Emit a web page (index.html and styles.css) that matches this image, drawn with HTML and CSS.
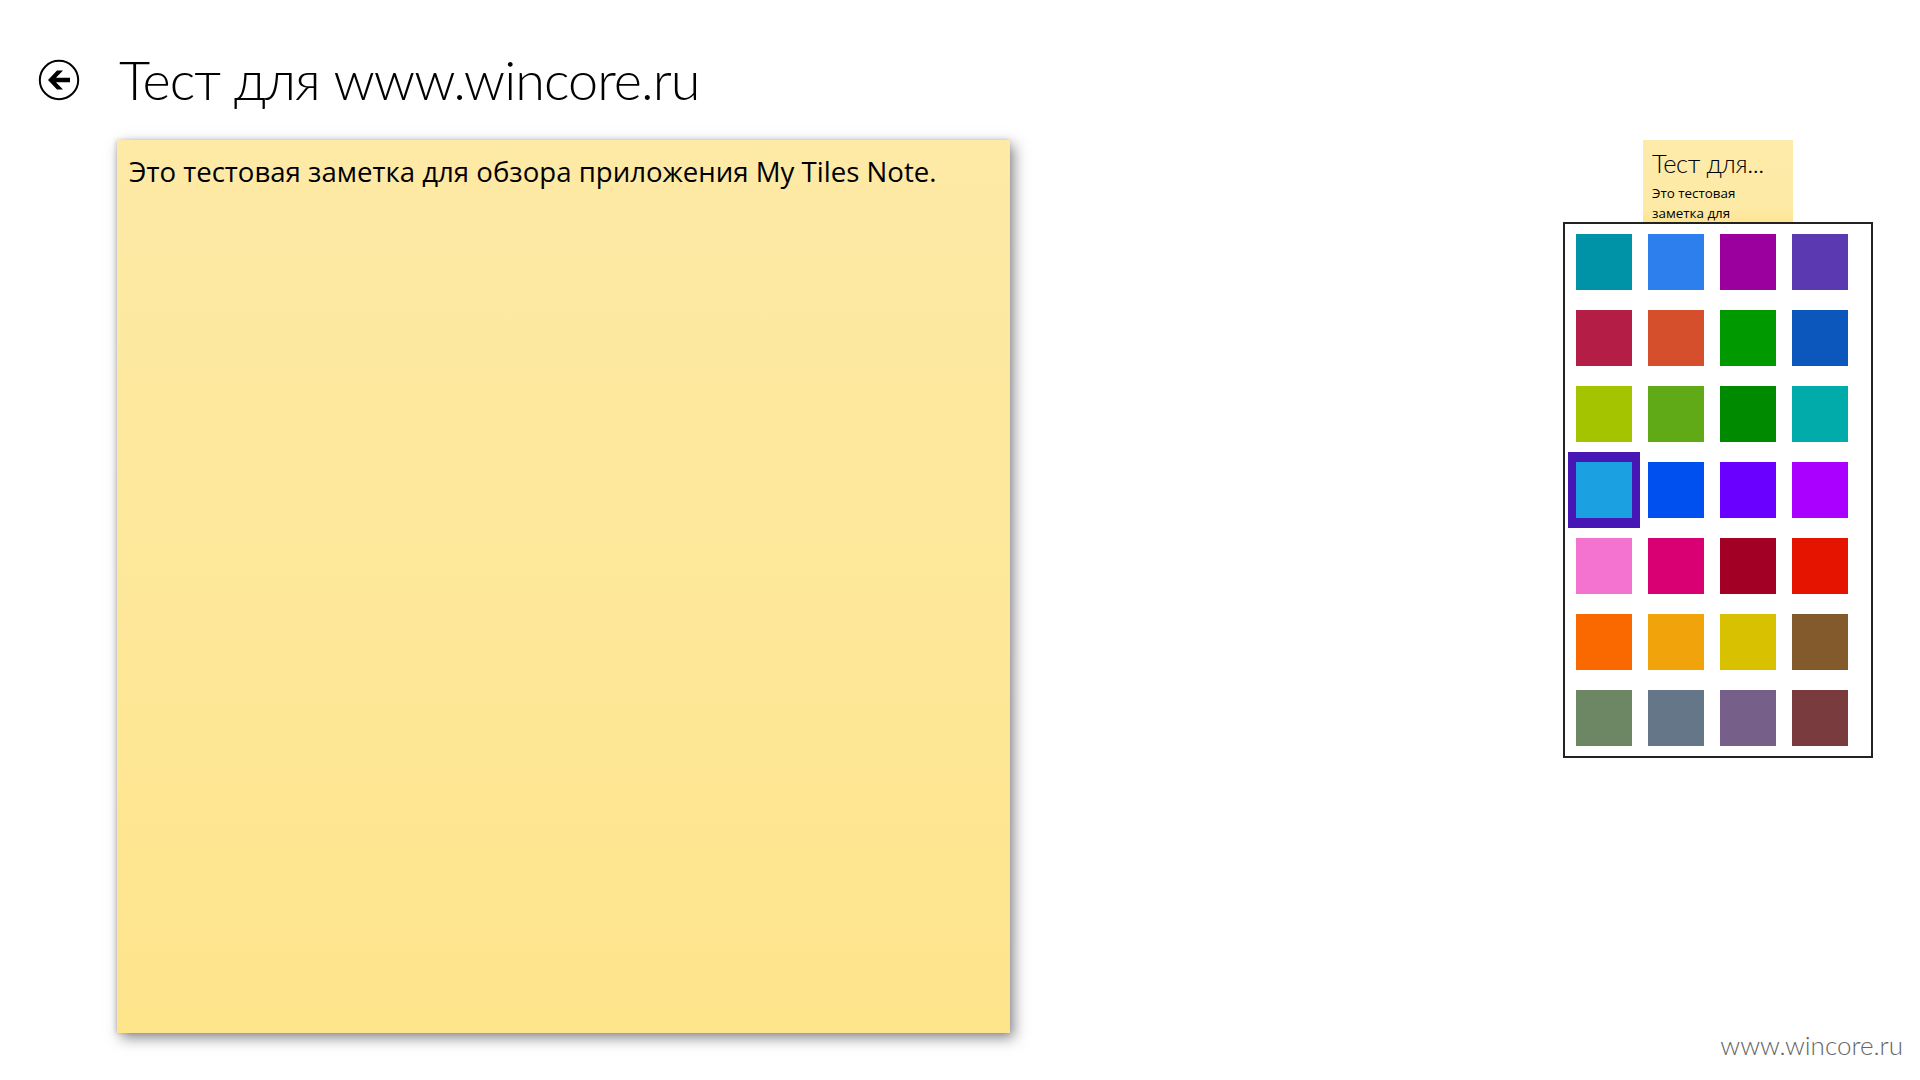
FILE: index.html
```html
<!DOCTYPE html>
<html lang="ru">
<head>
<meta charset="utf-8">
<title>Тест для www.wincore.ru</title>
<link rel="stylesheet" href="styles.css">
</head>
<body>
<div class="page">
  <header class="header">
    <svg class="back" width="42" height="42" viewBox="0 0 42 42" aria-hidden="true">
      <circle cx="21" cy="21" r="19.2" fill="none" stroke="#000" stroke-width="2"/>
      <path d="M10 21 L19 11.5 L25 11.5 L18 18.7 L32 18.7 L32 23.3 L18 23.3 L25 30.5 L19 30.5 Z" fill="#000"/>
    </svg>
    <h1 class="title">Тест для www.wincore.ru</h1>
  </header>
  <main class="main">
    <article class="note">
      <p class="note-text">Это тестовая заметка для обзора приложения My Tiles Note.</p>
    </article>
    <aside class="side">
      <div class="tile">
        <div class="tile-title">Тест для...</div>
        <div class="tile-text">Это тестовая заметка для обзора приложения</div>
      </div>
      <div class="palette">
        <div class="cell"><span class="swatch c1"></span></div>
        <div class="cell"><span class="swatch c2"></span></div>
        <div class="cell"><span class="swatch c3"></span></div>
        <div class="cell"><span class="swatch c4"></span></div>
        <div class="cell"><span class="swatch c5"></span></div>
        <div class="cell"><span class="swatch c6"></span></div>
        <div class="cell"><span class="swatch c7"></span></div>
        <div class="cell"><span class="swatch c8"></span></div>
        <div class="cell"><span class="swatch c9"></span></div>
        <div class="cell"><span class="swatch c10"></span></div>
        <div class="cell"><span class="swatch c11"></span></div>
        <div class="cell"><span class="swatch c12"></span></div>
        <div class="cell selected"><span class="swatch c13"></span></div>
        <div class="cell"><span class="swatch c14"></span></div>
        <div class="cell"><span class="swatch c15"></span></div>
        <div class="cell"><span class="swatch c16"></span></div>
        <div class="cell"><span class="swatch c17"></span></div>
        <div class="cell"><span class="swatch c18"></span></div>
        <div class="cell"><span class="swatch c19"></span></div>
        <div class="cell"><span class="swatch c20"></span></div>
        <div class="cell"><span class="swatch c21"></span></div>
        <div class="cell"><span class="swatch c22"></span></div>
        <div class="cell"><span class="swatch c23"></span></div>
        <div class="cell"><span class="swatch c24"></span></div>
        <div class="cell"><span class="swatch c25"></span></div>
        <div class="cell"><span class="swatch c26"></span></div>
        <div class="cell"><span class="swatch c27"></span></div>
        <div class="cell"><span class="swatch c28"></span></div>
      </div>
    </aside>
  </main>
  <div class="watermark">www.wincore.ru</div>
</div>
</body>
</html>
```

FILE: styles.css
```css
html, body {
  margin: 0;
  padding: 0;
  background: #fff;
}

.page {
  position: relative;
  width: 1920px;
  height: 1080px;
  overflow: hidden;
  font-family: "Open Sans", "Noto Sans", sans-serif;
  color: #000;
}

.header {
  display: flex;
  align-items: center;
  height: 140px;
  padding: 20px 0 0 38px;
  box-sizing: border-box;
}

.back {
  flex: none;
}

.title {
  margin: 0 0 0 39px;
  font-family: Lato, "Open Sans", sans-serif;
  font-size: 54px;
  font-weight: 300;
  line-height: 80px;
  letter-spacing: -0.95px;
  white-space: nowrap;
}

.main {
  display: flex;
  align-items: flex-start;
  padding-left: 117px;
}

.note {
  flex: none;
  box-sizing: border-box;
  width: 893px;
  height: 893px;
  padding: 13px 12px;
  background: linear-gradient(180deg, #fdeaa6 0%, #fee48b 100%);
  box-shadow: 4px 5px 13px rgba(60, 60, 70, 0.6), -1px 0 4px rgba(60, 60, 70, 0.2);
}

.note-text {
  margin: 0;
  font-size: 27.6px;
  line-height: 36px;
  white-space: nowrap;
}

.side {
  position: relative;
  flex: none;
  width: 150px;
  margin-left: 633px;
}

.tile {
  box-sizing: border-box;
  width: 150px;
  height: 150px;
  padding: 5px 30px 4px 9px;
  background: linear-gradient(180deg, #fdebab 0%, #fdeaa6 45%, #fee28a 60%);
  overflow: hidden;
}

.tile-title {
  font-family: Lato, "Open Sans", sans-serif;
  font-size: 25.5px;
  font-weight: 300;
  line-height: 36px;
  letter-spacing: -0.4px;
  white-space: nowrap;
}

.tile-text {
  margin-top: 2px;
  font-size: 13.4px;
  line-height: 20px;
}

.palette {
  position: absolute;
  left: -80px;
  top: 82px;
  box-sizing: border-box;
  display: grid;
  grid-template-columns: repeat(4, 72px);
  grid-auto-rows: 76px;
  width: 310px;
  height: 536px;
  padding: 0 15px 0 3px;
  background: #fff;
  border: 2px solid #222;
}

.cell {
  display: flex;
  align-items: center;
  justify-content: center;
  box-sizing: border-box;
}

.cell.selected {
  background: #4617b4;
}

.swatch {
  display: block;
  width: 56px;
  height: 56px;
}

.c1 { background: #0093a8; }
.c2 { background: #2d7fee; }
.c3 { background: #9b009f; }
.c4 { background: #5b39b0; }
.c5 { background: #b41d45; }
.c6 { background: #d54f2d; }
.c7 { background: #009a00; }
.c8 { background: #0c57bb; }
.c9 { background: #a4c400; }
.c10 { background: #60a917; }
.c11 { background: #008a00; }
.c12 { background: #00aba9; }
.c13 { background: #1ba1e2; }
.c14 { background: #0050ef; }
.c15 { background: #6a00ff; }
.c16 { background: #aa00ff; }
.c17 { background: #f472d0; }
.c18 { background: #d80073; }
.c19 { background: #a20025; }
.c20 { background: #e51400; }
.c21 { background: #fa6800; }
.c22 { background: #f0a30a; }
.c23 { background: #d8c100; }
.c24 { background: #825a2c; }
.c25 { background: #6d8764; }
.c26 { background: #647687; }
.c27 { background: #76608a; }
.c28 { background: #7a3b3f; }

.watermark {
  position: absolute;
  right: 17px;
  top: 1027px;
  font-family: Lato, "Open Sans", sans-serif;
  font-size: 26px;
  font-weight: 300;
  line-height: 36px;
  color: #666;
  white-space: nowrap;
}
```
